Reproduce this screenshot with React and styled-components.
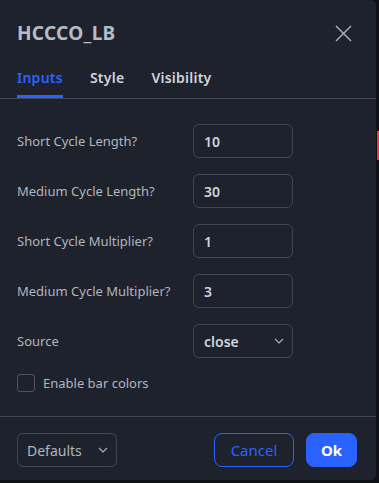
import React, { useState } from 'react';
import styled, { createGlobalStyle } from 'styled-components';

const GlobalStyle = createGlobalStyle`
  html, body {
    margin: 0;
    padding: 0;
    background: #0f1117;
  }
  body {
    font-family: "Noto Sans", "DejaVu Sans", sans-serif;
    -webkit-font-smoothing: antialiased;
  }
`;

const Page = styled.div`
  position: relative;
  width: 379px;
  height: 483px;
  overflow: hidden;
`;

const ChartMark = styled.div`
  position: absolute;
  left: 377px;
  top: 131px;
  width: 2px;
  height: 29px;
  background: #f23645;
`;

const Dialog = styled.div`
  width: 376px;
  height: 480px;
  background: #1e222d;
  border-radius: 0 6px 6px 0;
  display: flex;
  flex-direction: column;
  color: #d1d4dc;
`;

const Header = styled.div`
  display: flex;
  align-items: center;
  justify-content: space-between;
  padding: 20px 24px 0 17px;
  height: 26px;
`;

const Title = styled.h1`
  margin: 0;
  font-size: 19px;
  font-weight: 700;
  color: #b8bbc4;
  letter-spacing: 0.3px;
`;

const CloseButton = styled.button`
  background: none;
  border: none;
  padding: 0;
  width: 18px;
  height: 18px;
  display: flex;
  align-items: center;
  justify-content: center;
  cursor: pointer;
  color: #b2b5be;
`;

const Tabs = styled.div`
  display: flex;
  gap: 27px;
  padding: 0 17px;
  margin-top: 17px;
  border-bottom: 1px solid #434651;
`;

const Tab = styled.button`
  background: none;
  border: none;
  padding: 5px 0 11px;
  font-family: inherit;
  font-size: 14px;
  font-weight: 600;
  letter-spacing: 0.25px;
  color: ${(p) => (p.$active ? '#2962ff' : '#d1d4dc')};
  box-shadow: ${(p) => (p.$active ? 'inset 0 -3px 0 #2962ff' : 'none')};
  cursor: pointer;
`;

const Body = styled.div`
  flex: 1;
  display: flex;
  flex-direction: column;
  gap: 16px;
  padding: 25px 17px 0;
`;

const Row = styled.div`
  display: grid;
  grid-template-columns: 176px 100px;
  align-items: center;
`;

const Label = styled.span`
  font-size: 13px;
  color: #b2b5be;
`;

const Field = styled.div`
  box-sizing: border-box;
  height: 34px;
  border: 1px solid #434651;
  border-radius: 6px;
  display: flex;
  align-items: center;
  justify-content: space-between;
  padding: 0 8px 0 10px;
  font-size: 14px;
  font-weight: 600;
  color: #d1d4dc;
`;

const CheckRow = styled.label`
  display: flex;
  align-items: center;
  gap: 8px;
  font-size: 13px;
  color: #b2b5be;
  cursor: pointer;
`;

const Box = styled.span`
  box-sizing: border-box;
  width: 18px;
  height: 18px;
  border: 1px solid #50535e;
  border-radius: 3px;
`;

const Footer = styled.div`
  display: flex;
  align-items: center;
  gap: 12px;
  border-top: 1px solid #434651;
  padding: 16px 19px 13px 17px;
`;

const DefaultsButton = styled.button`
  box-sizing: border-box;
  width: 100px;
  height: 34px;
  margin-right: auto;
  display: flex;
  align-items: center;
  justify-content: space-between;
  padding: 0 8px 0 9px;
  background: none;
  border: 1px solid #434651;
  border-radius: 6px;
  font-family: inherit;
  font-size: 14px;
  color: #b2b5be;
`;

const ActionButton = styled.button`
  box-sizing: border-box;
  height: 34px;
  width: ${(p) => (p.$primary ? '51px' : '80px')};
  padding: 0;
  border-radius: 8px;
  border: 1px solid #2962ff;
  background: ${(p) => (p.$primary ? '#2962ff' : 'transparent')};
  color: ${(p) => (p.$primary ? '#ffffff' : '#2962ff')};
  font-family: inherit;
  font-size: 15px;
  font-weight: ${(p) => (p.$primary ? 700 : 400)};
  cursor: pointer;
`;

const Chevron = () => (
  <svg width="10" height="6" viewBox="0 0 10 6" fill="none">
    <path d="M1 1l4 4 4-4" stroke="#b2b5be" strokeWidth="1.1" />
  </svg>
);

const inputs = [
  { label: 'Short Cycle Length?', value: '10' },
  { label: 'Medium Cycle Length?', value: '30' },
  { label: 'Short Cycle Multiplier?', value: '1' },
  { label: 'Medium Cycle Multiplier?', value: '3' },
];

export default function App() {
  const [tab, setTab] = useState('Inputs');

  return (
    <Page>
      <GlobalStyle />
      <ChartMark />
      <Dialog>
        <Header>
          <Title>HCCCO_LB</Title>
          <CloseButton aria-label="Close">
            <svg width="17" height="17" viewBox="0 0 17 17">
              <path d="M1 1l15 15M16 1L1 16" stroke="currentColor" strokeWidth="1.4" />
            </svg>
          </CloseButton>
        </Header>
        <Tabs>
          {['Inputs', 'Style', 'Visibility'].map((t) => (
            <Tab key={t} $active={tab === t} onClick={() => setTab(t)}>
              {t}
            </Tab>
          ))}
        </Tabs>
        <Body>
          {inputs.map((i) => (
            <Row key={i.label}>
              <Label>{i.label}</Label>
              <Field>{i.value}</Field>
            </Row>
          ))}
          <Row>
            <Label>Source</Label>
            <Field>
              close
              <Chevron />
            </Field>
          </Row>
          <CheckRow>
            <Box />
            Enable bar colors
          </CheckRow>
        </Body>
        <Footer>
          <DefaultsButton>
            Defaults
            <Chevron />
          </DefaultsButton>
          <ActionButton>Cancel</ActionButton>
          <ActionButton $primary>Ok</ActionButton>
        </Footer>
      </Dialog>
    </Page>
  );
}
